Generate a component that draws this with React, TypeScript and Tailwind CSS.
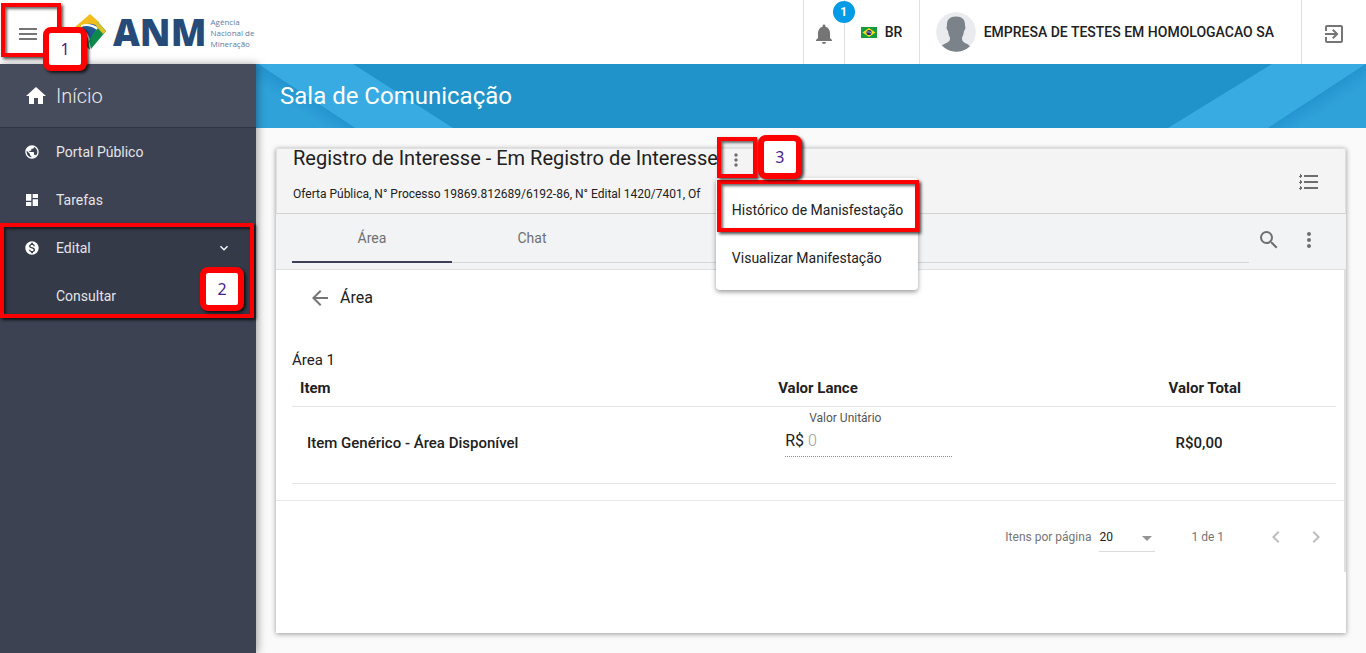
import type { ReactNode } from "react";
import {
  MdArrowBack,
  MdArrowDropDown,
  MdChevronLeft,
  MdChevronRight,
  MdDashboard,
  MdExitToApp,
  MdHome,
  MdKeyboardArrowDown,
  MdMenu,
  MdMonetizationOn,
  MdMoreVert,
  MdNotifications,
  MdPublic,
  MdSearch,
} from "react-icons/md";

const frame =
  "pointer-events-none absolute z-20 border-4 border-[#fe0000] shadow-[2px_2px_3px_rgba(0,0,0,0.7),inset_2px_2px_3px_rgba(0,0,0,0.6)]";

function Step({ n, className }: { n: number; className: string }) {
  return (
    <span
      className={
        "pointer-events-none absolute z-30 flex size-11 items-center justify-center rounded-lg border-[6px] border-[#fe0000] bg-white font-['Noto_Sans','Open_Sans',sans-serif] text-base text-[#4b1d8a] shadow-[2px_2px_3px_rgba(0,0,0,0.7)] " +
        className
      }
    >
      {n}
    </span>
  );
}

function Logo() {
  return (
    <a href="#" className="flex items-center" aria-label="ANM">
      <svg viewBox="0 0 34 38" className="h-[38px] w-[34px]" aria-hidden="true">
        <path d="M0 14 15 1l9 8-3 4-18 5z" fill="#f2bd1d" />
        <path d="M4 17l9 8 2 12-8-8z" fill="#0d8a4b" />
        <path d="M6 15c4-5 12-6 17-1l-8 14c-1-7-4-10-9-13z" fill="#1f5a96" />
        <path d="M6 12c6-2 13-1 17 3l-1 2c-5-4-11-5-16-3z" fill="#fff" />
        <path d="M23 9l8 9-15 18-2-8c3-6 6-10 9-13z" fill="#0d8a4b" />
        <path d="M21 7l10 11-3 3-7-8z" fill="#d9c327" />
      </svg>
      <span className="ml-1 font-['Open_Sans',sans-serif] text-[37px] leading-10 font-extrabold text-[#274b78]">
        ANM
      </span>
      <span className="ml-1 font-['Open_Sans',sans-serif] text-[8px] leading-[11px] text-[#5f7b9e]">
        Agência
        <br />
        Nacional de
        <br />
        Mineração
      </span>
    </a>
  );
}

function Flag() {
  return (
    <svg viewBox="0 0 16 11" className="h-[11px] w-4" aria-hidden="true">
      <rect width="16" height="11" fill="#149b3e" />
      <path d="M8 1l6.5 4.5L8 10 1.500 5.500z" fill="#f8dc18" />
      <circle cx="8" cy="5.500" r="2.600" fill="#24307c" />
      <path d="M5.600 4.900q2.800-.5 4.900 1.300" stroke="#fff" strokeWidth=".6" fill="none" />
    </svg>
  );
}

function Avatar() {
  return (
    <svg viewBox="0 0 40 40" className="size-10 rounded-full" aria-hidden="true">
      <circle cx="20" cy="20" r="20" fill="#e9ebef" />
      <path
        d="M20 4.500c-6.500 0-9.500 3.500-9 9.500-.8.600-.4 3.500 1 5 .4 3 1 5 2 6.500 0 3-.5 4-3 5.200-2.500 1-4 1.800-5 2.800A20 20 0 0 0 34 34.500c-1-1.500-2.500-2.600-5-3.600-2.500-1.200-3-2.400-3-5.400 1-1.500 1.600-3.500 2-6.500 1.400-1.500 1.800-4.400 1-5 .5-6-2.500-9.500-9-9.500z"
        fill="#7b828a"
      />
    </svg>
  );
}

function ListIcon() {
  return (
    <svg viewBox="0 0 24 24" className="size-6" fill="currentColor" aria-hidden="true">
      <path d="M7 5h14v2H7zM7 11h14v2H7zM7 17h14v2H7z" />
      <path d="M3 4h1v1h1v2H4v1H3V7H2V6h1zM3 10h1v1h1v2H4v1H3v-1H2v-1h1zM3 16h1v1h1v2H4v1H3v-1H2v-1h1z" />
    </svg>
  );
}

function NavItem({ icon, label, trailing }: { icon?: ReactNode; label: string; trailing?: ReactNode }) {
  return (
    <a href="#" className="flex h-12 items-center px-6 text-sm text-[#e4e5e9]">
      <span className="w-8 text-base text-white">{icon}</span>
      <span className="flex-1">{label}</span>
      {trailing}
    </a>
  );
}

function Header() {
  return (
    <header className="relative flex h-16 items-center bg-white">
      <div className="relative flex w-[75px] items-center pt-1 pl-4">
        <button type="button" aria-label="Menu" className="text-2xl text-[#757575]">
          <MdMenu />
        </button>
      </div>
      <Logo />
      <div className="ml-auto flex h-full items-stretch">
        <button
          type="button"
          aria-label="Notificações"
          className="relative flex w-[41px] items-center justify-center border-l border-[#e0e0e0] pt-1 text-2xl text-[#757575]"
        >
          <MdNotifications />
          <span className="absolute top-px -right-[11px] z-10 flex size-[22px] items-center justify-center rounded-full bg-[#039be5] text-xs font-bold text-white">
            1
          </span>
        </button>
        <button
          type="button"
          className="flex w-[75px] items-center gap-2 border-l border-[#e0e0e0] pl-4 text-sm font-medium"
        >
          <Flag />
          BR
        </button>
        <button
          type="button"
          className="flex items-center gap-2 border-l border-[#e0e0e0] pr-[27px] pl-4 text-sm font-medium"
        >
          <Avatar />
          EMPRESA DE TESTES EM HOMOLOGACAO SA
        </button>
        <button
          type="button"
          aria-label="Sair"
          className="flex w-[65px] items-center justify-center border-l border-[#e0e0e0] pt-1 text-2xl text-[#757575]"
        >
          <MdExitToApp />
        </button>
      </div>
      <span className={frame + " top-[3px] left-px h-[54px] w-[60px]"} />
      <Step n={1} className="top-[27px] left-[43px]" />
    </header>
  );
}

function Sidebar() {
  return (
    <aside className="z-10 w-64 shrink-0 bg-[#3d4252] shadow-[2px_0_8px_rgba(0,0,0,0.35)]">
      <a
        href="#"
        className="flex h-16 items-center border-b border-[#303440] bg-[#474c5c] px-6 text-xl font-light text-[#e8e9ec]"
      >
        <MdHome className="mr-2 size-6 text-white" />
        Início
      </a>
      <nav>
        <NavItem icon={<MdPublic />} label="Portal Público" />
        <NavItem icon={<MdDashboard />} label="Tarefas" />
        <div className="relative bg-[#353a48]">
          <NavItem
            icon={<MdMonetizationOn />}
            label="Edital"
            trailing={<MdKeyboardArrowDown className="size-4 text-white" />}
          />
          <NavItem label="Consultar" />
          <span className={frame + " -top-px left-0 h-[95px] w-[254px]"} />
          <Step n={2} className="top-[43px] left-[200px]" />
        </div>
      </nav>
    </aside>
  );
}

function Banner() {
  return (
    <div className="relative h-16 bg-[#2093ca]">
      <svg viewBox="0 0 200 64" className="absolute top-0 left-0 h-16 w-[200px]" aria-hidden="true">
        <defs>
          <linearGradient id="l" gradientUnits="userSpaceOnUse" x1="50" y1="32" x2="41" y2="46">
            <stop offset="0" stopColor="#2595cf" />
            <stop offset="1" stopColor="#30a2da" />
          </linearGradient>
        </defs>
        <path d="M2 0H97L197 64H99z" fill="#38abe2" />
        <path d="M0 0H2L99 64H0z" fill="url(#l)" />
      </svg>
      <svg viewBox="0 0 200 64" className="absolute top-0 right-0 h-16 w-[200px]" aria-hidden="true">
        <defs>
          <linearGradient id="r" gradientUnits="userSpaceOnUse" x1="151" y1="32" x2="160" y2="46">
            <stop offset="0" stopColor="#2595cf" />
            <stop offset="1" stopColor="#30a2da" />
          </linearGradient>
        </defs>
        <path d="M106 0H200L102 64H2z" fill="#38abe2" />
        <path d="M200 0V64H102z" fill="url(#r)" />
      </svg>
      <h1 className="relative flex h-full items-center pl-6 text-2xl text-white">Sala de Comunicação</h1>
    </div>
  );
}

function ActionsMenu() {
  return (
    <div className="relative -mt-[9px] -ml-0.5 flex size-10 shrink-0 items-center justify-center">
      <button type="button" aria-label="Mais ações" className="text-xl text-[#6f6f6f]">
        <MdMoreVert />
      </button>
      <div
        role="menu"
        className="absolute top-[38px] left-0 z-10 w-[202px] rounded bg-white py-2 text-sm shadow-[0_2px_5px_rgba(0,0,0,0.4)]"
      >
        <button type="button" role="menuitem" className="flex h-12 w-full items-center px-4 whitespace-nowrap">
          Histórico de Manisfestação
        </button>
        <button type="button" role="menuitem" className="flex h-12 w-full items-center px-4 whitespace-nowrap">
          Visualizar Manifestação
        </button>
        <span className={frame + " top-[2px] left-px h-[52px] w-[202px]"} />
      </div>
      <span className={frame + " -top-[3px] left-px h-[41px] w-10"} />
      <Step n={3} className="-top-[5px] left-[42px]" />
    </div>
  );
}

function BidTable() {
  return (
    <table className="w-full table-fixed text-left text-[15px] leading-5">
      <colgroup>
        <col className="w-[45.8%]" />
        <col className="w-[37.4%]" />
        <col />
      </colgroup>
      <thead>
        <tr className="h-9 border-b border-[#e5e5e5]">
          <th className="px-2 font-bold">Item</th>
          <th className="px-2 font-bold">Valor Lance</th>
          <th className="px-2 font-bold">Valor Total</th>
        </tr>
      </thead>
      <tbody>
        <tr className="h-[77px] border-b border-[#e5e5e5] font-medium">
          <td className="px-[15px] pb-1">Item Genérico - Área Disponível</td>
          <td className="px-[15px] align-top">
            <label htmlFor="unit" className="block pt-[3px] pl-6 text-xs leading-4 font-normal text-[#555]">
              Valor Unitário
            </label>
            <div className="flex h-[31px] w-[167px] items-center gap-1 border-b border-dotted border-[#8c8c8c] text-base font-normal">
              R$
              <input
                id="unit"
                placeholder="0"
                disabled
                className="w-full min-w-0 bg-transparent font-light placeholder:text-[#9a9a9a]"
              />
            </div>
          </td>
          <td className="px-[15px] pb-1">R$0,00</td>
        </tr>
      </tbody>
    </table>
  );
}

function Paginator() {
  return (
    <div className="flex h-[72px] items-center justify-end border-t border-[#e8e8e8] pt-0.5 pr-4 text-xs text-[#757575]">
      <label htmlFor="size">Itens por página</label>
      <div className="relative ml-2 h-[30px] w-14 border-b border-[#dcdcdc]">
        <select id="size" className="h-full w-full appearance-none bg-transparent text-[#212121]">
          <option>20</option>
        </select>
        <MdArrowDropDown className="pointer-events-none absolute top-1 -right-1 size-6 text-[#949494]" />
      </div>
      <span className="ml-9">1 de 1</span>
      <button type="button" aria-label="Página anterior" className="ml-10 text-2xl text-[#bdbdbd]">
        <MdChevronLeft />
      </button>
      <button type="button" aria-label="Próxima página" className="ml-4 text-2xl text-[#bdbdbd]">
        <MdChevronRight />
      </button>
    </div>
  );
}

export default function App() {
  return (
    <div className="flex min-h-screen flex-col bg-[#fafafa] font-[Roboto,sans-serif] text-[#212121]">
      <Header />
      <div className="flex flex-1">
        <Sidebar />
        <main className="flex min-w-0 flex-1 flex-col">
          <Banner />
          <section className="m-5 flex-1 bg-white shadow-[0_1px_5px_rgba(0,0,0,0.4)]">
            <div className="flex h-[66px] items-start justify-between border border-b-[#d2d2d2] border-[#e0e0e0] bg-[#f4f4f4] pr-6 pl-4">
              <div className="min-w-0">
                <div className="flex h-6 items-start">
                  <h2 className="text-xl leading-[18px] whitespace-nowrap">
                    Registro de Interesse - Em Registro de Interesse
                  </h2>
                  <ActionsMenu />
                </div>
                <p className="pt-3 text-xs leading-[18px]">
                  Oferta Pública, N° Processo 19869.812689/6192-86, N° Edital 1420/7401, Of
                </p>
              </div>
              <button type="button" aria-label="Lista" className="self-center pt-0.5 text-[#6f6f6f]">
                <ListIcon />
              </button>
            </div>
            <div className="flex h-14 border-b border-[#e0e0e0] bg-[#f2f3f5] pl-4">
              <div role="tablist" className="flex h-[49px] flex-1 border-b border-[#d5d6d8] text-sm text-[#6f7072]">
                <button type="button" role="tab" aria-selected="true" className="-mb-px w-40 border-b-2 border-[#3d4157]">
                  Área
                </button>
                <button type="button" role="tab" aria-selected="false" className="w-40">
                  Chat
                </button>
              </div>
              <div className="flex items-center gap-4 pr-[25px] pb-1 pl-2 text-2xl text-[#6f6f6f]">
                <button type="button" aria-label="Pesquisar">
                  <MdSearch />
                </button>
                <button type="button" aria-label="Mais opções">
                  <MdMoreVert />
                </button>
              </div>
            </div>
            <div className="border-r-2 border-[#e0e0e0]">
              <div className="flex h-14 items-center gap-2 pl-8">
                <button type="button" aria-label="Voltar" className="text-2xl text-[#757575]">
                  <MdArrowBack />
                </button>
                <span className="text-base">Área</span>
              </div>
              <div className="pt-6 pr-2 pb-4 pl-4">
                <h3 className="text-[15px] leading-5">Área 1</h3>
                <BidTable />
              </div>
              <Paginator />
            </div>
          </section>
        </main>
      </div>
    </div>
  );
}
